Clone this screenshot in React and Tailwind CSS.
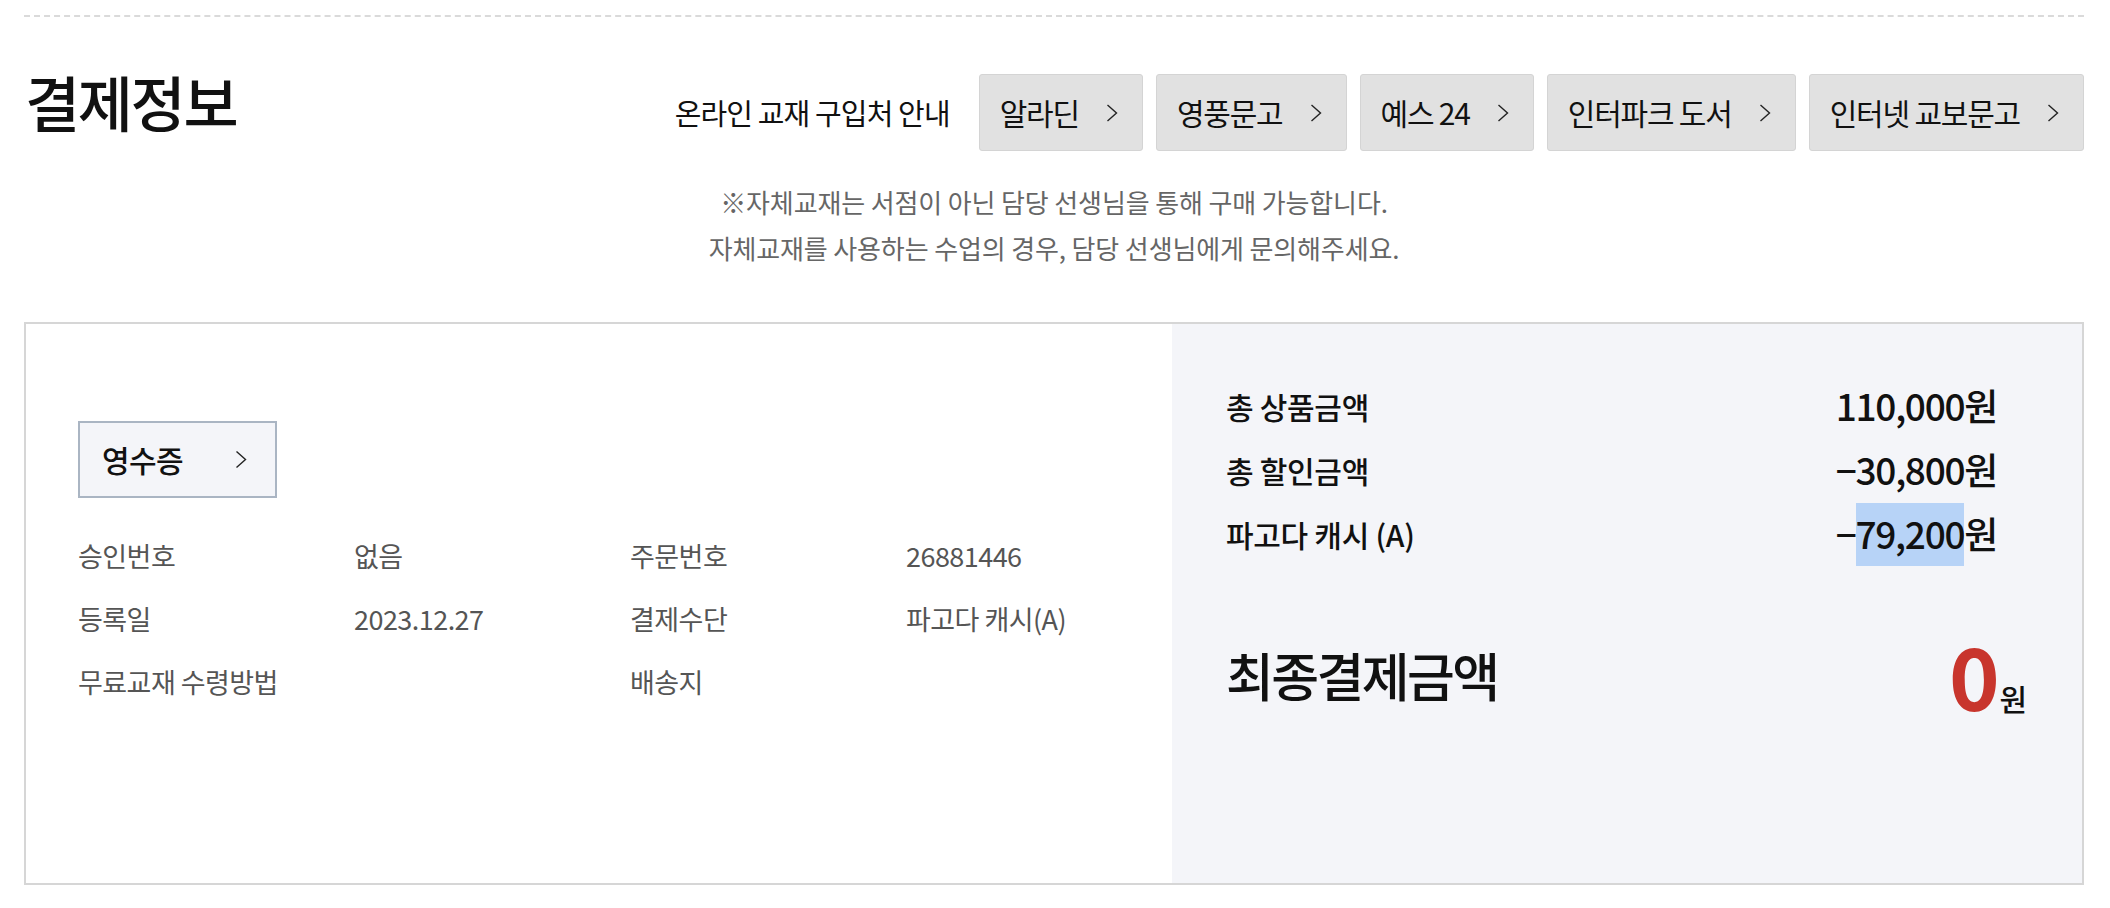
import React from 'react';

const stores = ['알라딘', '영풍문고', '예스 24', '인터파크 도서', '인터넷 교보문고'];

const Chevron = ({ className = 'w-[12px] h-[18px]' }) => (
  <svg className={className} viewBox="0 0 12 18" fill="none" stroke="currentColor" strokeWidth="1.4">
    <polyline points="1.5,1 10.5,9 1.5,17" />
  </svg>
);

const info = [
  ['승인번호', '없음', '주문번호', '26881446'],
  ['등록일', '2023.12.27', '결제수단', '파고다 캐시(A)'],
  ['무료교재 수령방법', '', '배송지', ''],
];

const App = () => {
  return (
    <div className="w-full min-h-[908px] bg-white pl-[24px] pr-[26px] pt-[15px] font-['Noto_Sans_CJK_KR','Noto_Sans',sans-serif] text-[#111]">
      {/* top dashed divider */}
      <div className="border-t-2 border-dashed border-[#dadada]" />

      {/* header */}
      <div className="flex justify-between items-start mt-[57px]">
        <h2 className="text-[60px] leading-[60px] font-medium tracking-[-0.04em] mt-[-3px] ml-[1px]">결제정보</h2>
        <div className="flex items-center">
          <span className="text-[29px] tracking-[-0.03em] mr-[29px]">온라인 교재 구입처 안내</span>
          <div className="flex gap-[13px]">
            {stores.map((s) => (
              <button
                key={s}
                className="h-[77px] flex items-center bg-[#e1e1e1] border border-[#d4d4d4] rounded-[3px] pl-[20px] pr-[24px] text-[30px] tracking-[-0.04em]"
              >
                <span>{s}</span>
                <Chevron className="w-[12px] h-[18px] ml-[27px] text-[#222]" />
              </button>
            ))}
          </div>
        </div>
      </div>

      {/* notice */}
      <div className="mt-[28px] text-center text-[26px] leading-[46px] tracking-[-0.005em] text-[#666]">
        <p>※자체교재는 서점이 아닌 담당 선생님을 통해 구매 가능합니다.</p>
        <p>자체교재를 사용하는 수업의 경우, 담당 선생님에게 문의해주세요.</p>
      </div>

      {/* payment box */}
      <div className="mt-[51px] h-[563px] border-2 border-[#d6d6d6] flex">
        {/* left */}
        <div className="flex-1 min-w-0 pl-[52px] pt-[97px]">
          <button className="w-[199px] h-[77px] flex items-center justify-between bg-[#f4f5f9] border-2 border-[#aab5c3] pl-[22px] pr-[28px] text-[30px] font-medium tracking-[-0.02em]">
            <span>영수증</span>
            <Chevron className="w-[12px] h-[23px] text-[#222]" />
          </button>
          <div className="mt-[27px] grid grid-cols-[276px_276px_276px_276px] text-[27px] tracking-[-0.02em] text-[#555]">
            {info.map((row, i) =>
              row.map((cell, j) => (
                <div key={`${i}-${j}`} className="h-[63px] flex items-center whitespace-nowrap">
                  {cell}
                </div>
              ))
            )}
          </div>
        </div>

        {/* right */}
        <div className="w-[910px] shrink-0 bg-[#f4f5f9] pl-[54px] pt-[50px]">
          <div className="pr-[85px]">
            <div className="h-[64px] flex items-center justify-between">
              <span className="text-[30px] font-medium tracking-[-0.01em]">총 상품금액</span>
              <span className="text-[37px] font-medium tracking-[-0.035em]">110,000원</span>
            </div>
            <div className="h-[64px] flex items-center justify-between">
              <span className="text-[30px] font-medium tracking-[-0.01em]">총 할인금액</span>
              <span className="text-[37px] font-medium tracking-[-0.035em]">−30,800원</span>
            </div>
            <div className="h-[64px] flex items-center justify-between">
              <span className="text-[30px] font-medium tracking-[-0.01em]">파고다 캐시 (A)</span>
              <span className="text-[37px] font-medium tracking-[-0.035em] flex items-center">
                −<span className="inline-flex items-center h-[63px] bg-[#b7d3f7]">79,200</span>원
              </span>
            </div>
          </div>
          <div className="mt-[64px] pr-[55px] h-[90px] flex items-center justify-between">
            <span className="text-[52px] font-medium tracking-[-0.05em]">최종결제금액</span>
            <span className="flex items-baseline">
              <span className="text-[86px] leading-[90px] font-bold text-[#c8352d] tracking-[-0.04em]">0</span>
              <span className="text-[30px] font-medium ml-[3px]">원</span>
            </span>
          </div>
        </div>
      </div>
    </div>
  );
};

export default App;
